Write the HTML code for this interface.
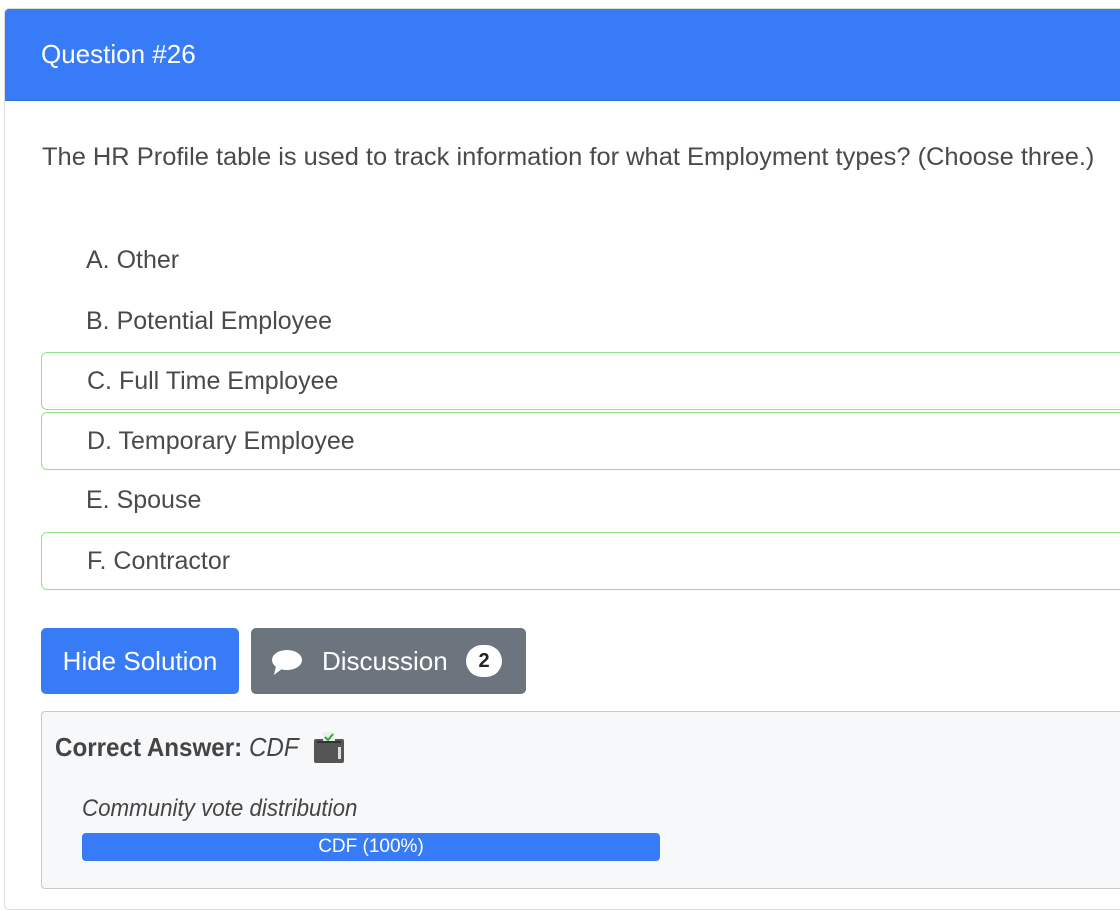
<!DOCTYPE html>
<html><head><style>
body{margin:0;width:1120px;height:892px;overflow:hidden;background:#fff;font-family:"Liberation Sans Narrow","Liberation Sans",sans-serif;color:#4a4a4a}
.card{position:absolute;left:4px;top:8px;width:1130px;height:900px;border:1px solid #ddd;border-radius:5px;overflow:hidden}
.hdr{height:91px;background:#377bf6;color:#fff;font-size:26px;line-height:91px;padding-left:36px;border-bottom:1px solid #2f6fd8}
.q{position:absolute;left:37px;top:134px;font-size:25px;white-space:nowrap;transform:scaleX(1.018);transform-origin:left}
.opt{position:absolute;left:36px;width:1100px;height:58px;font-size:25px;line-height:56px;padding-left:45px;box-sizing:border-box;border-radius:6px}
.ok{border:1px solid #8fe38a}
.btn{position:absolute;top:619px;height:66px;border-radius:5px;color:#fff;font-size:26px;line-height:66px}
.ans{position:absolute;left:36px;top:702px;width:1100px;height:176px;background:#f7f8fa;border:1px solid #c8c8c8;border-radius:4px}
</style></head><body>
<div class="card">
<div class="hdr">Question #26</div>
<div class="q">The HR Profile table is used to track information for what Employment types? (Choose three.)</div>
<div class="opt" style="top:223px">A. Other</div>
<div class="opt" style="top:284px">B. Potential Employee</div>
<div class="opt ok" style="top:343px">C. Full Time Employee</div>
<div class="opt ok" style="top:403px">D. Temporary Employee</div>
<div class="opt" style="top:463px">E. Spouse</div>
<div class="opt ok" style="top:523px">F. Contractor</div>
<div class="btn" style="left:36px;width:198px;background:#377bf6;text-align:center">Hide Solution</div>
<div class="btn" style="left:246px;width:275px;background:#6c757d">
<svg style="position:absolute;left:20px;top:20px" width="32" height="28" viewBox="0 0 32 28"><ellipse cx="16" cy="12" rx="15" ry="10" fill="#fff"/><path d="M5 18 L3 27 L12 20 Z" fill="#fff"/></svg>
<span style="position:absolute;left:71px">Discussion</span>
<span style="position:absolute;left:215px;top:17px;width:36px;height:32px;border-radius:16px;background:#fff;color:#222;font-size:20px;line-height:32px;text-align:center;font-weight:bold">2</span></div>
<div class="ans">
<div style="position:absolute;left:13px;top:20px;font-size:26px;color:#444;white-space:nowrap;transform:scaleX(0.93);transform-origin:left"><b>Correct Answer:</b> <i>CDF</i></div>
<svg style="position:absolute;left:270px;top:18px" width="34" height="34" viewBox="0 0 34 34"><rect x="2" y="9" width="30" height="24" rx="2" fill="#555"/><rect x="11" y="2" width="12" height="10" fill="#eee"/><path d="M13 7l3 3 5-6" stroke="#3a3" stroke-width="2" fill="none"/><rect x="5" y="11" width="24" height="2" fill="#333"/><rect x="26" y="17" width="3" height="12" fill="#ddd"/></svg>
<div style="position:absolute;left:40px;top:83px;font-size:24px;font-style:italic;color:#444;transform:scaleX(0.93);transform-origin:left;white-space:nowrap">Community vote distribution</div>
<div style="position:absolute;left:40px;top:121px;width:578px;height:28px;background:#377bf6;border-radius:4px;color:#fff;text-align:center;font-size:19px;line-height:28px">CDF (100%)</div>
</div>
</div>
</body></html>
